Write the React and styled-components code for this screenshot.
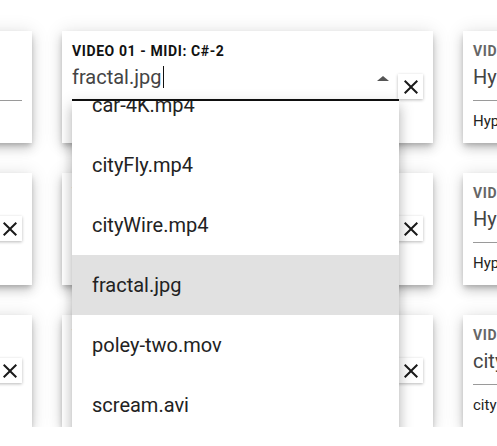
import React from "react";
import styled, { createGlobalStyle, css } from "styled-components";

const GlobalStyle = createGlobalStyle`
  body {
    margin: 0;
    background: #fff;
    overflow: hidden;
    font-family: Roboto, "Liberation Sans", sans-serif;
  }
`;

const Board = styled.div`
  display: grid;
  grid-template-columns: repeat(3, 371px);
  column-gap: 30px;
  row-gap: 30px;
  padding-top: 31px;
  margin-left: -339px;
`;

const Card = styled.div`
  box-sizing: border-box;
  height: 112px;
  padding: 12px 10px;
  background: #fff;
  box-shadow: 0 3px 5px -1px rgba(0, 0, 0, 0.2), 0 6px 10px 0 rgba(0, 0, 0, 0.14),
    0 1px 18px 0 rgba(0, 0, 0, 0.12);
`;

const Label = styled.div`
  font-size: 14px;
  font-weight: 700;
  letter-spacing: 0.6px;
  line-height: 16px;
  color: ${({ $focused }) => ($focused ? "#111" : "#666")};
  white-space: nowrap;
`;

const FieldRow = styled.div`
  display: flex;
  align-items: flex-end;
  margin-top: 7px;
`;

const Field = styled.div`
  position: relative;
  flex: 1;
  display: flex;
  align-items: center;
  ${({ $focused }) =>
    $focused
      ? css`
          padding-bottom: 11px;
          border-bottom: 2px solid #111;
        `
      : css`
          padding-bottom: 12px;
          border-bottom: 1px solid #9a9a9a;
        `}
`;

const Value = styled.div`
  font-size: 20px;
  line-height: 22px;
  height: 22px;
  color: #444;
  white-space: nowrap;
  display: flex;
  align-items: center;
`;

const Caret = styled.span`
  display: inline-block;
  width: 1px;
  height: 22px;
  margin-left: 1px;
  background: #111;
`;

const Arrow = styled.span`
  margin-left: auto;
  margin-right: 10px;
  margin-top: 2px;
  width: 0;
  height: 0;
  border-left: 6px solid transparent;
  border-right: 6px solid transparent;
  border-bottom: 5px solid #555;
`;

const ClearButton = styled.button`
  flex: none;
  width: 25px;
  height: 25px;
  margin: 0 0 2px -1px;
  padding: 0;
  border: none;
  background: #fff;
  box-shadow: 0 1px 3px rgba(0, 0, 0, 0.28);
  display: flex;
  align-items: center;
  justify-content: center;
  color: #1a1a1a;
`;

const Helper = styled.div`
  margin-top: 10px;
  font-size: 15px;
  line-height: 20px;
  color: #222;
  white-space: nowrap;
`;

const Menu = styled.div`
  position: absolute;
  top: calc(100% + 2px);
  left: 0;
  right: 0;
  height: 380px;
  overflow: hidden;
  background: #fff;
  z-index: 10;
  box-shadow: 0 5px 5px -3px rgba(0, 0, 0, 0.2), 0 8px 10px 1px rgba(0, 0, 0, 0.14),
    0 3px 14px 2px rgba(0, 0, 0, 0.12);
`;

const MenuList = styled.div`
  margin-top: -26px;
`;

const Option = styled.div`
  height: 60px;
  display: flex;
  align-items: center;
  padding: 0 20px;
  font-size: 20px;
  color: #222;
  background: ${({ $selected }) => ($selected ? "#e1e1e1" : "#fff")};
`;

const CloseIcon = () => (
  <svg width="24" height="24" viewBox="0 0 24 24" fill="currentColor">
    <path d="M19 6.41L17.59 5 12 10.59 6.41 5 5 6.41 10.59 12 5 17.59 6.41 19 12 13.41 17.59 19 19 17.59 13.41 12z" />
  </svg>
);

const files = [
  "car-4K.mp4",
  "cityFly.mp4",
  "cityWire.mp4",
  "fractal.jpg",
  "poley-two.mov",
  "scream.avi",
  "tunnel.mp4",
];

const slots = [
  { label: "VIDEO 00 - MIDI: C-2", value: "" },
  { label: "VIDEO 01 - MIDI: C#-2", value: "fractal.jpg", open: true },
  { label: "VIDEO 02 - MIDI: D-2", value: "Hyperspace.mp4" },
  { label: "VIDEO 03 - MIDI: D#-2", value: "cityWire.mp4" },
  { label: "VIDEO 04 - MIDI: E-2", value: "car-4K.mp4" },
  { label: "VIDEO 05 - MIDI: F-2", value: "Hyperspace.mp4" },
  { label: "VIDEO 06 - MIDI: F#-2", value: "scream.avi" },
  { label: "VIDEO 07 - MIDI: G-2", value: "poley-two.mov" },
  { label: "VIDEO 08 - MIDI: G#-2", value: "cityFly.mp4" },
];

const Slot = ({ slot }) => {
  const focused = !!slot.open;
  return (
    <Card>
      <Label $focused={focused}>{slot.label}</Label>
      <FieldRow>
        <Field $focused={focused}>
          <Value>
            {slot.value}
            {focused && <Caret />}
          </Value>
          {focused && <Arrow />}
          {focused && (
            <Menu>
              <MenuList>
                {files.map((f) => (
                  <Option key={f} $selected={f === slot.value}>
                    {f}
                  </Option>
                ))}
              </MenuList>
            </Menu>
          )}
        </Field>
        {slot.value && (
          <ClearButton>
            <CloseIcon />
          </ClearButton>
        )}
      </FieldRow>
      <Helper>{focused ? "" : slot.value}</Helper>
    </Card>
  );
};

export default function App() {
  return (
    <>
      <GlobalStyle />
      <Board>
        {slots.map((s) => (
          <Slot key={s.label} slot={s} />
        ))}
      </Board>
    </>
  );
}
